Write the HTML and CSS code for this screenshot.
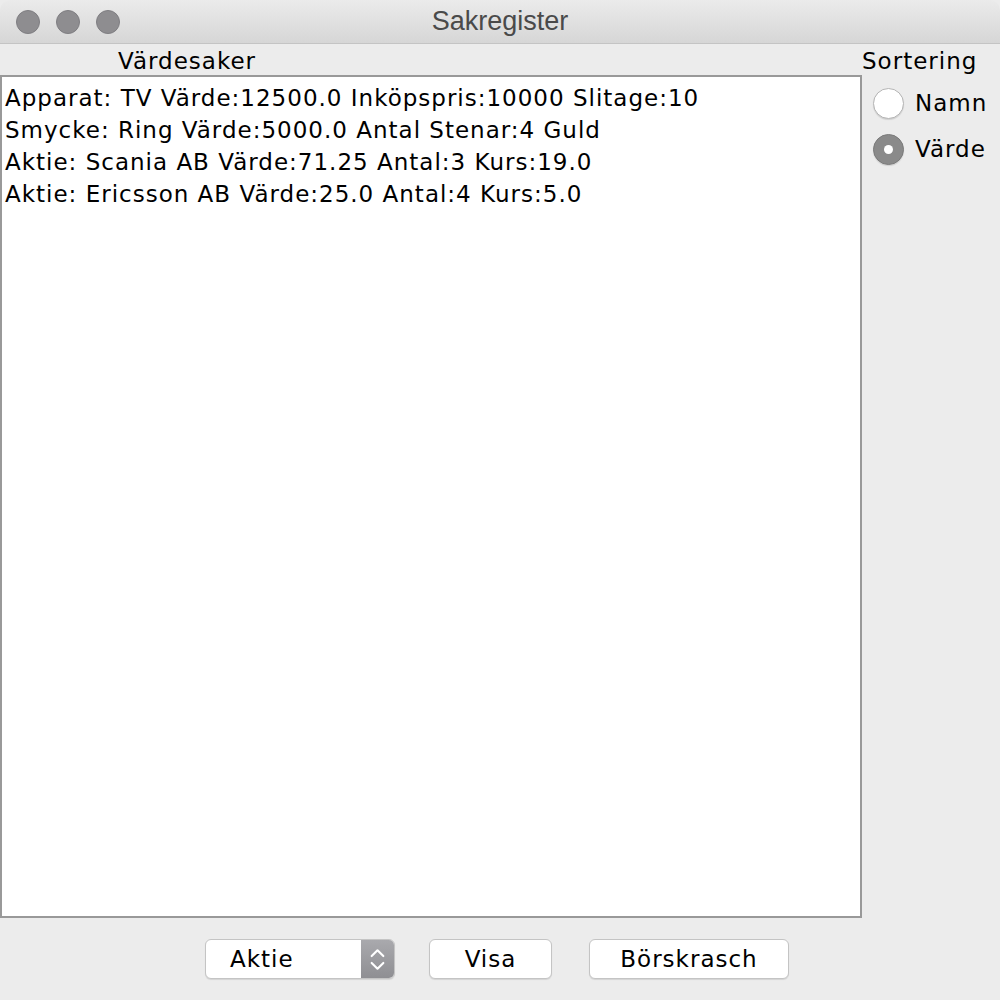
FILE: index.html
```html
<!DOCTYPE html>
<html>
<head>
<meta charset="utf-8">
<link rel="stylesheet" href="styles.css">
</head>
<body>
<div class="window">
  <div class="titlebar">
    <div class="lights">
      <span class="light"></span><span class="light"></span><span class="light"></span>
    </div>
    <div class="title">Sakregister</div>
  </div>
  <div class="main">
    <div class="left">
      <div class="list-label">Värdesaker</div>
      <div class="list">
        <div class="row">Apparat: TV Värde:12500.0 Inköpspris:10000 Slitage:10</div>
        <div class="row">Smycke: Ring Värde:5000.0 Antal Stenar:4 Guld</div>
        <div class="row">Aktie: Scania AB Värde:71.25 Antal:3 Kurs:19.0</div>
        <div class="row">Aktie: Ericsson AB Värde:25.0 Antal:4 Kurs:5.0</div>
      </div>
    </div>
    <div class="right">
      <div class="sort-label">Sortering</div>
      <div class="radio"><span class="circle"></span><span>Namn</span></div>
      <div class="radio"><span class="circle checked"></span><span>Värde</span></div>
    </div>
  </div>
  <div class="footer">
    <div class="combo"><span class="combo-text">Aktie</span><span class="combo-arrows"><svg width="34" height="40" viewBox="0 0 34 40"><path d="M11 17 L17 11 L23 17" fill="none" stroke="#fff" stroke-width="2.2" stroke-linecap="round" stroke-linejoin="round"/><path d="M11 24 L17 30 L23 24" fill="none" stroke="#fff" stroke-width="2.2" stroke-linecap="round" stroke-linejoin="round"/></svg></span></div>
    <div class="btn visa">Visa</div>
    <div class="btn krasch">Börskrasch</div>
  </div>
</div>
</body>
</html>
```
FILE: styles.css
```css
html, body {
  margin: 0;
  padding: 0;
  background: #ececec;
  overflow: hidden;
}
.window {
  width: 1000px;
  height: 1000px;
  background: #ececec;
  font-family: "DejaVu Sans", "Liberation Sans", sans-serif;
  font-size: 23px;
  letter-spacing: 1px;
  color: #000;
  display: flex;
  flex-direction: column;
}
.titlebar {
  height: 43px;
  border-bottom: 1px solid #c4c4c4;
  background: linear-gradient(#ebebeb, #d6d6d6);
  border-radius: 10px 10px 0 0;
  display: flex;
  align-items: center;
  position: relative;
}
.lights {
  display: flex;
  gap: 16px;
  padding-left: 16px;
}
.light {
  width: 24px;
  height: 24px;
  border-radius: 50%;
  background: #8e8d90;
  border: 1px solid #7f7e82;
  box-sizing: border-box;
}
.title {
  position: absolute;
  left: 0;
  right: 0;
  text-align: center;
  color: #4a4a4a;
  font-family: "Liberation Sans", "DejaVu Sans", sans-serif;
  font-size: 27px;
  letter-spacing: 0;
}
.main {
  display: flex;
  height: 874px;
}
.left {
  width: 862px;
  display: flex;
  flex-direction: column;
}
.list-label {
  height: 31px;
  padding-left: 118px;
  line-height: 34px;
}
.list {
  height: 843px;
  box-sizing: border-box;
  border: 2px solid #999;
  background: #fff;
  padding: 5px 3px;
}
.row {
  line-height: 32px;
  white-space: nowrap;
}
.right {
  flex: 1;
  display: flex;
  flex-direction: column;
}
.sort-label {
  line-height: 34px;
  height: 36px;
  padding-left: 0;
}
.radio {
  display: flex;
  align-items: center;
  gap: 11px;
  height: 46px;
  padding-left: 11px;
}
.circle {
  width: 31px;
  height: 31px;
  border-radius: 50%;
  box-sizing: border-box;
  border: 1px solid #b5b5b5;
  background: #fff;
  box-shadow: 0 1px 1px rgba(0,0,0,0.12);
  position: relative;
}
.circle.checked {
  background: #8a8a8a;
  border-color: #7b7b7b;
}
.circle.checked::after {
  content: "";
  position: absolute;
  left: 10px;
  top: 10px;
  width: 9px;
  height: 9px;
  border-radius: 50%;
  background: #fff;
}
.footer {
  flex: 1;
  display: flex;
  justify-content: flex-start;
  align-items: flex-start;
  padding-top: 21px;
  padding-left: 205px;
}
.combo {
  width: 190px;
  height: 40px;
  box-sizing: border-box;
  border: 1px solid #c4c4c4;
  border-radius: 6px;
  background: #fff;
  display: flex;
  overflow: hidden;
  box-shadow: 0 1px 1px rgba(0,0,0,0.1);
}
.combo-text {
  flex: 1;
  line-height: 38px;
  padding-left: 24px;
}
.combo-arrows {
  width: 33px;
  background: linear-gradient(#a9a9ad, #8f8f93);
  display: flex;
  align-items: center;
  justify-content: center;
}
.btn {
  height: 40px;
  box-sizing: border-box;
  border: 1px solid #c4c4c4;
  border-radius: 6px;
  background: #fff;
  line-height: 38px;
  text-align: center;
  box-shadow: 0 1px 1px rgba(0,0,0,0.1);
}
.visa {
  width: 123px;
  margin-left: 34px;
}
.krasch {
  width: 200px;
  margin-left: 37px;
}
```
